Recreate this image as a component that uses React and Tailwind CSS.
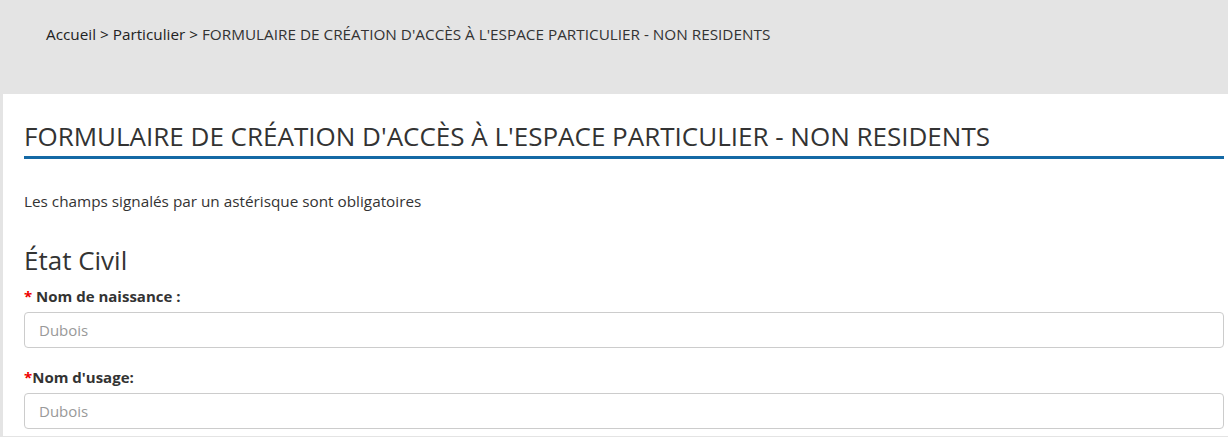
import React from "react";

function Field({ label, star, placeholder }) {
  return (
    <div className="flex flex-col">
      <label className="text-[15px] font-bold text-[#333] leading-[20px] mb-[6px]">
        <span className="text-[#e00]">*</span>
        {star ? " " : ""}
        {label}
      </label>
      <input
        className="h-[36px] w-full rounded-[4px] border border-[#ccc] px-[14px] text-[15px] text-[#555] placeholder:text-[#999] outline-none"
        placeholder={placeholder}
      />
    </div>
  );
}

export default function App() {
  return (
    <div className="min-h-[437px] bg-[#e4e4e4] font-['Open_Sans',sans-serif] text-[#333]">
      <div className="h-[94px] px-[46px] pt-[24px]">
        <p className="text-[15.3px] leading-[20px] text-[#222]">
          Accueil &gt; Particulier &gt;{" "}
          <span className="text-[#333]">
            FORMULAIRE DE CRÉATION D'ACCÈS À L'ESPACE PARTICULIER - NON RESIDENTS
          </span>
        </p>
      </div>
      <div className="ml-[3px] bg-white pl-[21px] pr-[4px] pt-[24px] pb-[7px]">
        <h1 className="border-b-[3px] border-[#1469a5] pb-[2px] text-[26px] leading-[36px] text-[#333]">
          FORMULAIRE DE CRÉATION D'ACCÈS À L'ESPACE PARTICULIER - NON RESIDENTS
        </h1>
        <p className="mt-[32px] text-[15.3px] leading-[20px]">
          Les champs signalés par un astérisque sont obligatoires
        </p>
        <h2 className="mt-[31px] text-[26px] leading-[36px]">État Civil</h2>
        <div className="mt-[8px] flex flex-col gap-[19px]">
          <Field label="Nom de naissance :" star placeholder="Dubois" />
          <Field label="Nom d'usage:" placeholder="Dubois" />
        </div>
      </div>
    </div>
  );
}
